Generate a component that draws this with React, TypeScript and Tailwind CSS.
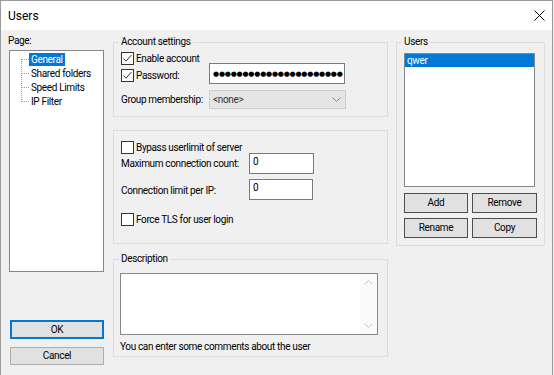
import React from "react";

function Check({ checked }: { checked?: boolean }) {
  return (
    <span className="w-[13px] h-[13px] border border-[#333333] bg-white flex items-center justify-center shrink-0">
      {checked && (
        <svg width="11" height="11" viewBox="0 0 11 11">
          <path d="M1.5 5.5 L4 8.2 L9.5 2" fill="none" stroke="#333333" strokeWidth="1" />
        </svg>
      )}
    </span>
  );
}

function Btn({ label, w }: { label: string; w: string }) {
  return (
    <button className={`${w} h-[20px] bg-[#e1e1e1] border border-[#4d4d4d] leading-[12px] text-black`}>
      {label}
    </button>
  );
}

export default function App() {
  const pages = ["General", "Shared folders", "Speed Limits", "IP Filter"];
  const dots = Array.from({ length: 22 });

  return (
    <div className="w-[554px] h-[375px] overflow-hidden bg-[#f0f0f0] text-black text-[10px] leading-[12px] tracking-[-0.35px] whitespace-nowrap [font-family:Roboto,'Liberation_Sans',sans-serif]">
      <div className="w-[553px] h-[375px] border-l border-t border-r border-[#9a9a9a] flex flex-col">
        {/* title bar */}
        <div className="h-[29px] bg-white flex items-center justify-between pl-[7px] pr-[7px] text-[12px] tracking-normal">
          <span>Users</span>
          <svg width="11" height="11" viewBox="0 0 11 11">
            <path d="M0.5 0.5 L10.5 10.5 M10.5 0.5 L0.5 10.5" stroke="#000" strokeWidth="1" />
          </svg>
        </div>

        <div className="flex flex-1">
          {/* left column */}
          <div className="w-[112px] pl-[8px] flex flex-col">
            <div className="mt-[5px] h-[12px] -ml-[1px]">Page:</div>
            <div className="mt-[3px] w-[95px] h-[222px] border border-[#828790] bg-white relative pt-[1px]">
              <svg className="absolute left-0 top-0" width="93" height="60">
                <g stroke="#a0a0a0" strokeWidth="1" strokeDasharray="1 1">
                  <path d="M11.5 8 V51" />
                  <path d="M12 8.5 H20 M12 22.5 H20 M12 36.5 H20 M12 50.5 H20" />
                </g>
              </svg>
              {pages.map((p, i) => (
                <div key={p} className="h-[14px] pl-[19px] flex items-center">
                  <span
                    className={`px-[2px] h-[13px] leading-[13px] ${
                      i === 0 ? "bg-[#0078d7] text-white" : ""
                    }`}
                  >
                    {p}
                  </span>
                </div>
              ))}
            </div>
            <button className="mt-[48px] ml-[1px] w-[94px] h-[19px] border-2 border-[#0078d7] bg-[#e1e1e1] leading-[12px]">
              OK
            </button>
            <button className="mt-[8px] ml-[1px] w-[94px] h-[18px] border border-[#adadad] bg-[#e1e1e1] leading-[12px]">
              Cancel
            </button>
          </div>

          {/* middle column */}
          <div className="w-[275px] flex flex-col">
            <fieldset className="mt-[6px] border border-[#dcdcdc] pb-[7px]">
              <legend className="ml-[5px] px-[2px] h-[12px] leading-[12px]">Account settings</legend>
              <div className="mt-[4px] h-[13px] pl-[7px] flex items-center">
                <Check checked />
                <span className="ml-[2px]">Enable account</span>
              </div>
              <div className="-mt-[2px] flex">
                <div className="w-[95px] pl-[7px] pt-[6px] flex items-start">
                  <Check checked />
                  <span className="ml-[2px] leading-[13px]">Password:</span>
                </div>
                <div className="w-[136px] h-[21px] bg-white border border-[#7a7a7a] flex items-center pl-[3px] overflow-hidden">
                  {dots.map((_, i) => (
                    <span key={i} className="inline-block w-[5.9px] shrink-0 text-center text-[7px] leading-[8px] tracking-normal [font-family:'DejaVu_Sans',sans-serif]">
                      ●
                    </span>
                  ))}
                </div>
              </div>
              <div className="mt-[6px] flex items-center">
                <div className="w-[95px] pl-[7px]">Group membership:</div>
                <div className="w-[137px] h-[19px] bg-[#e5e5e5] border border-[#cccccc] flex items-center justify-between pl-[3px] pr-[4px] text-[#333333]">
                  <span>&lt;none&gt;</span>
                  <svg width="9" height="5" viewBox="0 0 9 5">
                    <path d="M0.5 0.5 L4.5 4.5 L8.5 0.5" fill="none" stroke="#888" strokeWidth="1" />
                  </svg>
                </div>
              </div>
            </fieldset>

            <div className="mt-[13px] h-[114px] border border-[#dcdcdc] pt-[10px] flex flex-col">
              <div className="h-[13px] pl-[7px] flex items-center">
                <Check />
                <span className="ml-[2px]">Bypass userlimit of server</span>
              </div>
              <div className="-mt-[1px] h-[21px] flex items-center">
                <div className="w-[135px] pl-[7px]">Maximum connection count:</div>
                <div className="w-[65px] h-[21px] bg-white border border-[#7a7a7a] pl-[3px] pt-[2px]">0</div>
              </div>
              <div className="mt-[5px] h-[21px] flex items-center">
                <div className="w-[135px] pl-[7px] pt-[3px]">Connection limit per IP:</div>
                <div className="w-[64px] h-[21px] bg-white border border-[#7a7a7a] pl-[3px] pt-[2px]">0</div>
              </div>
              <div className="mt-[13px] h-[13px] pl-[7px] flex items-center">
                <Check />
                <span className="ml-[2px]">Force TLS for user login</span>
              </div>
            </div>

            <fieldset className="mt-[9px] border border-[#dcdcdc] pb-[3px]">
              <legend className="ml-[5px] px-[2px] h-[12px] leading-[12px]">Description</legend>
              <div className="mt-[8px] ml-[6px] w-[258px] h-[62px] bg-white border border-[#828790] flex justify-end">
                <div className="w-[17px] h-full flex flex-col items-center justify-between py-[6px] bg-[#fafafa]">
                  <svg width="9" height="5" viewBox="0 0 9 5">
                    <path d="M0.5 4.5 L4.5 0.5 L8.5 4.5" fill="none" stroke="#c2c2c2" strokeWidth="1" />
                  </svg>
                  <svg width="9" height="5" viewBox="0 0 9 5">
                    <path d="M0.5 0.5 L4.5 4.5 L8.5 0.5" fill="none" stroke="#c2c2c2" strokeWidth="1" />
                  </svg>
                </div>
              </div>
              <div className="mt-[6px] ml-[6px] h-[12px]">You can enter some comments about the user</div>
            </fieldset>
          </div>

          {/* right column */}
          <div className="ml-[8px] w-[149px]">
            <fieldset className="mt-[6px] border border-[#dcdcdc] pb-[7px]">
              <legend className="ml-[5px] px-[2px] h-[12px] leading-[12px]">Users</legend>
              <div className="mt-[5px] ml-[7px] w-[131px] h-[134px] bg-white border border-[#828790]">
                <div className="h-[13px] leading-[13px] bg-[#0078d7] text-white pl-[2px]">qwer</div>
              </div>
              <div className="mt-[6px] ml-[7px] flex gap-[4px]">
                <Btn label="Add" w="w-[64px]" />
                <Btn label="Remove" w="w-[65px]" />
              </div>
              <div className="mt-[5px] ml-[7px] flex gap-[4px]">
                <Btn label="Rename" w="w-[64px]" />
                <Btn label="Copy" w="w-[65px]" />
              </div>
            </fieldset>
          </div>
        </div>
      </div>
    </div>
  );
}
